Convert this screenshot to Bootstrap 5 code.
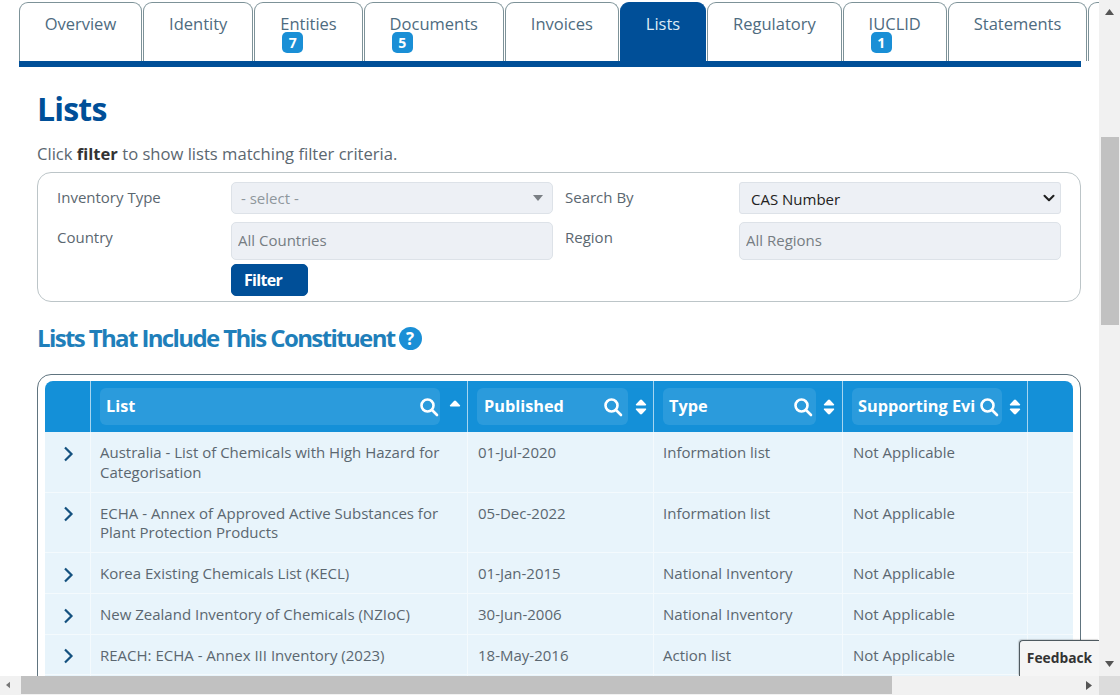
<!DOCTYPE html>
<html lang="en">
<head>
<meta charset="utf-8">
<title>Lists</title>
<link href="https://cdn.jsdelivr.net/npm/bootstrap@5.3.0/dist/css/bootstrap.min.css" rel="stylesheet">
<style>
html,body{height:695px;overflow:hidden;background:#fff}
body{font-family:"Open Sans",sans-serif;font-size:16px;color:#5b6770}
.shell{width:1120px;height:695px}
.pane{width:1099px;height:676px;overflow:hidden;position:relative}
.vbar{width:21px;height:676px;background:#f1f1f1}
.hbar{height:19px;background:#f1f1f1}
.corner{width:21px;background:#dcdcdc}
.vthumb{width:18px;height:188px;background:#c1c1c1;margin:118px 0 0 2px}
.hthumb{width:871px;height:18px;background:#c1c1c1;margin-left:11px}
.arr{width:21px;height:19px;flex:none}
.arrw{width:10px;flex:none;height:19px}
.tabstrip{padding:2px 0 0 18.7px;margin:0;border:0;width:1200px;gap:1px;flex-wrap:nowrap}
.tabstrip .nav-link{position:relative;height:59px;margin:0;padding:9px 24.95px 0;font-size:16.5px;line-height:24px;color:#4e6b80;background:#fff;border:1px solid #7d9298;border-bottom:0;border-radius:9px 9px 0 0;box-shadow:inset 0 0 0 1px #fff}
.tabstrip .nav-link.active{background:#004f98;color:#dceaf6;border-color:#004f98;box-shadow:none;font-weight:500}
.tabnum{position:absolute;left:27px;top:29px;width:21px;height:21px;padding:0;line-height:21px;border-radius:5px;background:#1a8fd6;color:#fff;font-size:14px;font-weight:700}
.rule{height:6px;width:1062px;margin-left:19px;background:#004f98}
.body-wrap{padding:0 18px 0 37px}
.page-title{font-size:32px;font-weight:700;color:#004f98;letter-spacing:-.8px;line-height:40px;margin:22px 0 0 0}
.intro{margin:13px 0 6px;line-height:24px;font-size:16.6px}
.intro b{color:#333}
.filterbox{height:130px;border:1px solid #bcc5c8;border-radius:14px;padding:9px 19px 0 19px}
.lbl{line-height:30px;font-size:15px}
.lbl1{width:174px;flex:none}
.lbl2{width:174px;flex:none;margin-left:12px}
.ctl{width:322px;flex:none}
.fakeselect{height:32px;background:#edf0f5;border:1px solid #dde2e8;border-radius:5px;color:#8f979d;padding:0 9px;font-size:15px;line-height:30px}
.fakeselect span:first-child{margin-top:-1px}
.caret-dn{width:0;height:0;border-left:5px solid transparent;border-right:5px solid transparent;border-top:6px solid #7a7f84}
.form-select.casel{height:32px;background-color:#edf0f5;border:1px solid #dde2e8;border-radius:3px;color:#222;font-size:15px;padding:2px 11px 0;background-position:right 3px center;background-image:url("data:image/svg+xml,%3csvg xmlns='http://www.w3.org/2000/svg' viewBox='0 0 16 16'%3e%3cpath fill='none' stroke='%23222' stroke-linecap='round' stroke-linejoin='round' stroke-width='2.800' d='m2 5 6 6 6-6'/%3e%3c/svg%3e")}
.form-control.txt{height:38px;background:#edf0f5;border:1px solid #dde2e8;border-radius:5px;padding:0 6px 2px;font-size:15px;color:#333}
.form-control.txt::placeholder{color:#767d83;opacity:1}
.btn.filterbtn{width:77px;height:32px;padding:0;background:#004f98;border:1px solid #004f98;color:#fff;font-weight:700;font-size:16px;letter-spacing:-.7px;border-radius:5px;text-align:left;padding-left:12px;margin-left:174px}
.subhead{font-size:24px;font-weight:700;color:#1f7fba;letter-spacing:-1.62px;line-height:32px;margin:20px 0 20px 0}
.helpdot{width:23px;height:23px;border-radius:50%;background:#1a8fd6;color:#fff;font-size:17px;font-weight:700;line-height:23px;letter-spacing:0;margin-left:4px}
.tablebox{border:1px solid #60747f;border-radius:14px;padding:6px 7px 7px}
.table.chem{table-layout:fixed;width:1028px;margin:0;border-collapse:separate;border-spacing:0;font-size:15px;line-height:19.750px;--bs-table-bg:#e8f4fb;--bs-table-color:#5b6770;--bs-table-border-color:#f4fafd}
.chem thead th{height:51px;background:#1490d8;color:#fff;padding:7px 0 7px 9px;border:0;border-right:1px solid #a5d5f0;vertical-align:middle}
.chem thead th:first-child{border-top-left-radius:8px;padding:0}
.chem thead th:last-child{border-top-right-radius:8px;border-right:0;padding:0}
.chem tbody td{padding:11px 10px 9px;border:0;border-bottom:1px solid #f4fafd;border-right:1px solid #f4fafd}
.chem tbody td:first-child{padding:11px 0 0 18px}
.chem tbody td:nth-child(2),.chem tbody td:nth-child(4){padding-left:9px}
.chem tbody td:last-child{border-right:0}
.c0{width:46px}.c1{width:377px}.c2{width:186px}.c3{width:189px}.c4{width:185px}.c5{width:45px}
.headbox{flex:none;height:37px;background:#2b9bdc;border-radius:6px;padding:0 1px 0 6px;font-size:16.3px;font-weight:700;white-space:nowrap;overflow:hidden}
.sorter{width:25px;flex:none}
.c1h+.sorter{width:30px}
.c1h{width:340px}.c2h{width:151px;padding:0 5px 0 7px}.c3h{width:153px;padding-right:3px}.c4h{width:150px;padding-right:3px}
.feedback{position:absolute;right:0;bottom:0;width:80px;height:36px;background:#f5f5f5;border-left:1px solid #4f5a60;border-top:1px solid #4f5a60;border-radius:4px 0 0 0;color:#333;font-size:13.800px;font-weight:700;line-height:34px;text-align:center;box-shadow:-1px -1px 1px rgba(0,0,0,.15)}
</style>
</head>
<body>
<div class="shell d-flex flex-column">
  <div class="d-flex">
    <div class="pane">
      <ul class="nav nav-tabs tabstrip">
        <li class="nav-item"><a class="nav-link" href="#">Overview</a></li>
        <li class="nav-item"><a class="nav-link" href="#">Identity</a></li>
        <li class="nav-item"><a class="nav-link" href="#">Entities<span class="badge tabnum">7</span></a></li>
        <li class="nav-item"><a class="nav-link" href="#">Documents<span class="badge tabnum">5</span></a></li>
        <li class="nav-item"><a class="nav-link" href="#">Invoices</a></li>
        <li class="nav-item"><a class="nav-link active" href="#">Lists</a></li>
        <li class="nav-item"><a class="nav-link" href="#">Regulatory</a></li>
        <li class="nav-item"><a class="nav-link" href="#">IUCLID<span class="badge tabnum">1</span></a></li>
        <li class="nav-item"><a class="nav-link" href="#">Statements</a></li>
        <li class="nav-item"><a class="nav-link" href="#">&nbsp;</a></li>
      </ul>
      <div class="rule"></div>
      <div class="body-wrap">
        <h1 class="page-title">Lists</h1>
        <p class="intro">Click <b>filter</b> to show lists matching filter criteria.</p>
        <div class="filterbox">
          <div class="d-flex mb-2">
            <div class="lbl lbl1">Inventory Type</div>
            <div class="ctl fakeselect d-flex align-items-center justify-content-between"><span>- select -</span><span class="caret-dn"></span></div>
            <div class="lbl lbl2">Search By</div>
            <div class="ctl"><select class="form-select casel" aria-label="Search By"><option>CAS Number</option></select></div>
          </div>
          <div class="d-flex">
            <div class="lbl lbl1">Country</div>
            <div class="ctl"><input class="form-control txt" placeholder="All Countries"></div>
            <div class="lbl lbl2">Region</div>
            <div class="ctl"><input class="form-control txt" placeholder="All Regions"></div>
          </div>
          <button class="btn filterbtn mt-1" type="button">Filter</button>
        </div>
        <h2 class="subhead d-flex align-items-center">Lists That Include This Constituent<span class="helpdot text-center">?</span></h2>
        <div class="tablebox">
          <table class="table chem">
            <thead>
              <tr>
                <th class="c0"></th>
                <th class="c1"><div class="d-flex align-items-center"><div class="headbox c1h d-flex align-items-center justify-content-between"><span>List</span><svg width="20" height="20" viewBox="0 0 20 20" fill="none" stroke="#fff" stroke-width="2.6"><circle cx="8.5" cy="8.5" r="6"/><path d="M13 13l5 5" stroke-linecap="round"/></svg></div><div class="sorter d-flex justify-content-center"><svg width="12" height="16" viewBox="0 0 12 16" fill="#fff"><path d="M6 1.5c.4 0 .7.2 1 .5l4 4.300c.5.600.1 1.200-.6 1.200H1.600c-.7 0-1.100-.6-.6-1.200L5 2c.3-.3.6-.5 1-.5z"/></svg></div></div></th>
                <th class="c2"><div class="d-flex align-items-center"><div class="headbox c2h d-flex align-items-center justify-content-between"><span>Published</span><svg width="20" height="20" viewBox="0 0 20 20" fill="none" stroke="#fff" stroke-width="2.6"><circle cx="8.5" cy="8.5" r="6"/><path d="M13 13l5 5" stroke-linecap="round"/></svg></div><div class="sorter d-flex justify-content-center"><svg width="12" height="16" viewBox="0 0 12 16" fill="#fff"><path d="M6 .5c.4 0 .7.2 1 .5l4 4.300c.5.600.1 1.200-.6 1.200H1.600c-.7 0-1.100-.6-.6-1.200L5 1c.3-.3.6-.5 1-.5zM6 15.500c-.4 0-.7-.2-1-.5L1 10.700c-.5-.6-.1-1.200.6-1.200h8.800c.7 0 1.100.6.600 1.200L7 15c-.3.300-.6.500-1 .5z"/></svg></div></div></th>
                <th class="c3"><div class="d-flex align-items-center"><div class="headbox c3h d-flex align-items-center justify-content-between"><span>Type</span><svg width="20" height="20" viewBox="0 0 20 20" fill="none" stroke="#fff" stroke-width="2.6"><circle cx="8.5" cy="8.5" r="6"/><path d="M13 13l5 5" stroke-linecap="round"/></svg></div><div class="sorter d-flex justify-content-center"><svg width="12" height="16" viewBox="0 0 12 16" fill="#fff"><path d="M6 .5c.4 0 .7.2 1 .5l4 4.300c.5.600.1 1.200-.6 1.200H1.600c-.7 0-1.100-.6-.6-1.200L5 1c.3-.3.6-.5 1-.5zM6 15.500c-.4 0-.7-.2-1-.5L1 10.700c-.5-.6-.1-1.200.6-1.200h8.800c.7 0 1.100.6.600 1.200L7 15c-.3.300-.6.500-1 .5z"/></svg></div></div></th>
                <th class="c4"><div class="d-flex align-items-center"><div class="headbox c4h d-flex align-items-center justify-content-between"><span>Supporting Evi</span><svg width="20" height="20" viewBox="0 0 20 20" fill="none" stroke="#fff" stroke-width="2.6"><circle cx="8.5" cy="8.5" r="6"/><path d="M13 13l5 5" stroke-linecap="round"/></svg></div><div class="sorter d-flex justify-content-center"><svg width="12" height="16" viewBox="0 0 12 16" fill="#fff"><path d="M6 .5c.4 0 .7.2 1 .5l4 4.300c.5.600.1 1.200-.6 1.200H1.600c-.7 0-1.100-.6-.6-1.200L5 1c.3-.3.6-.5 1-.5zM6 15.500c-.4 0-.7-.2-1-.5L1 10.700c-.5-.6-.1-1.200.6-1.200h8.800c.7 0 1.100.6.600 1.200L7 15c-.3.300-.6.500-1 .5z"/></svg></div></div></th>
                <th class="c5"></th>
              </tr>
            </thead>
            <tbody>
              <tr><td><svg width="11" height="16" viewBox="0 0 11 16" fill="none" stroke="#14517f" stroke-width="2.200"><path d="M2 1.500l6.500 6.500-6.500 6.500"/></svg></td><td>Australia - List of Chemicals with High Hazard for Categorisation</td><td>01-Jul-2020</td><td>Information list</td><td>Not Applicable</td><td></td></tr>
              <tr><td><svg width="11" height="16" viewBox="0 0 11 16" fill="none" stroke="#14517f" stroke-width="2.200"><path d="M2 1.500l6.500 6.500-6.500 6.500"/></svg></td><td>ECHA - Annex of Approved Active Substances for Plant Protection Products</td><td>05-Dec-2022</td><td>Information list</td><td>Not Applicable</td><td></td></tr>
              <tr><td><svg width="11" height="16" viewBox="0 0 11 16" fill="none" stroke="#14517f" stroke-width="2.200"><path d="M2 1.500l6.500 6.500-6.500 6.500"/></svg></td><td>Korea Existing Chemicals List (KECL)</td><td>01-Jan-2015</td><td>National Inventory</td><td>Not Applicable</td><td></td></tr>
              <tr><td><svg width="11" height="16" viewBox="0 0 11 16" fill="none" stroke="#14517f" stroke-width="2.200"><path d="M2 1.500l6.500 6.500-6.500 6.500"/></svg></td><td>New Zealand Inventory of Chemicals (NZIoC)</td><td>30-Jun-2006</td><td>National Inventory</td><td>Not Applicable</td><td></td></tr>
              <tr><td><svg width="11" height="16" viewBox="0 0 11 16" fill="none" stroke="#14517f" stroke-width="2.200"><path d="M2 1.500l6.500 6.500-6.500 6.500"/></svg></td><td>REACH: ECHA - Annex III Inventory (2023)</td><td>18-May-2016</td><td>Action list</td><td>Not Applicable</td><td></td></tr>
              <tr><td></td><td>&nbsp;</td><td></td><td></td><td></td><td></td></tr>
            </tbody>
          </table>
        </div>
      </div>
      <div class="feedback">Feedback</div>
    </div>
    <div class="vbar d-flex flex-column">
      <svg class="arr" viewBox="0 0 21 19" fill="#555"><path d="M6 15l4.500-6 4.500 6z"/></svg>
      <div class="vthumb"></div>
      <svg class="arr mt-auto" viewBox="0 0 21 19" fill="#555"><path d="M6 4h9l-4.500 6z"/></svg>
    </div>
  </div>
  <div class="d-flex">
    <div class="hbar d-flex flex-grow-1 align-items-start">
      <svg class="arrw" viewBox="0 0 10 19" fill="#777"><path d="M13 4l-6 5 6 5z" transform="translate(-1 0)"/></svg>
      <div class="hthumb"></div>
      <svg class="arrw ms-auto me-1" viewBox="0 0 10 19" fill="#555"><path d="M1 5l6 4.500-6 4.500z"/></svg>
    </div>
    <div class="corner"></div>
  </div>
</div>
<script src="https://cdn.jsdelivr.net/npm/bootstrap@5.3.0/dist/js/bootstrap.bundle.min.js"></script>
</body>
</html>
